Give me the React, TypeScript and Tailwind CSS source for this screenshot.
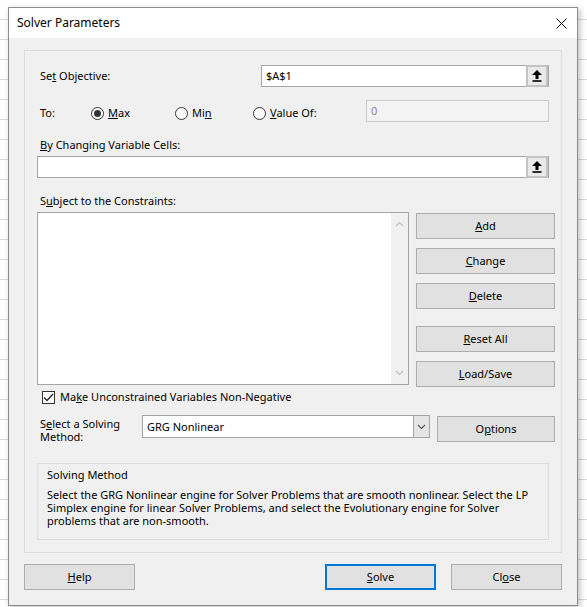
function RefButton() {
  return (
    <div className="flex h-[22px] w-[22px] shrink-0 items-center justify-center border-2 border-[#c4c4c4] bg-[#e9e9e9]">
      <svg width="10" height="12" viewBox="0 0 10 12">
        <polygon points="5,0 10,5 6.5,5 6.5,9 3.5,9 3.5,5 0,5" fill="#000" />
        <rect x="0.5" y="10.2" width="9" height="1.6" fill="#000" />
      </svg>
    </div>
  );
}

function Radio({ checked, label }: { checked?: boolean; label: React.ReactNode }) {
  return (
    <div className="flex items-center gap-[4px]">
      <span className="flex h-[13px] w-[13px] items-center justify-center rounded-full border border-[#333] bg-white">
        {checked && <span className="h-[7px] w-[7px] rounded-full bg-[#333]" />}
      </span>
      <span>{label}</span>
    </div>
  );
}

function Btn({ children, className = "" }: { children: React.ReactNode; className?: string }) {
  return (
    <div className={`flex h-[26px] items-center justify-center border border-[#adadad] bg-[#e1e1e1] ${className}`}>
      {children}
    </div>
  );
}

export default function App() {
  return (
    <div className="relative h-[607px] w-[587px] overflow-hidden bg-[repeating-linear-gradient(to_bottom,#ffffff_0,#ffffff_19px,#d9d9d9_19px,#d9d9d9_20px)] font-['Noto_Sans',sans-serif] text-[11px] leading-[16px] text-black">
      <div className="ml-[8px] mt-[7px] h-[599px] w-[570px] border border-[#8c8c8c] bg-[#f0f0f0] shadow-[2px_2px_6px_rgba(0,0,0,0.25)]">
        {/* title bar */}
        <div className="flex h-[30px] items-center justify-between bg-white pl-[8px] pr-[10px]">
          <span className="text-[12px]">Solver Parameters</span>
          <svg width="11" height="11" viewBox="0 0 11 11">
            <path d="M0.5 0.5 L10.5 10.5 M10.5 0.5 L0.5 10.5" stroke="#000" strokeWidth="1" />
          </svg>
        </div>

        <div className="px-[15px] pt-[12px]">
          {/* main group */}
          <div className="h-[503px] border border-[#dcdcdc] pl-[12px] pr-[5px]">
            <div className="mt-[14px] flex h-[22px] items-center">
              <span className="w-[224px] pl-[3px]">
                Se<u>t</u> Objective:
              </span>
              <div className="flex h-[22px] w-[288px] items-center border border-[#a5a5a5] bg-white pl-[4px]">
                <span className="flex-1">$A$1</span>
                <RefButton />
              </div>
            </div>

            <div className="mt-[13px] flex h-[22px] items-start">
              <span className="mt-[5px] w-[54px] pl-[3px]">To:</span>
              <div className="mt-[5px] w-[84px]">
                <Radio checked label={<><u>M</u>ax</>} />
              </div>
              <div className="mt-[5px] w-[78px]">
                <Radio label={<>Mi<u>n</u></>} />
              </div>
              <div className="mt-[5px] w-[113px]">
                <Radio label={<><u>V</u>alue Of:</>} />
              </div>
              <div className="flex h-[22px] w-[183px] items-center border border-[#cccccc] bg-[#f3f3f3] pl-[4px] text-[#8a8a8a]">
                0
              </div>
            </div>

            <div className="mt-[15px] h-[16px] pl-[3px]">
              <u>B</u>y Changing Variable Cells:
            </div>
            <div className="mt-[3px] flex h-[22px] w-[512px] items-center border border-[#a5a5a5] bg-white">
              <span className="flex-1" />
              <RefButton />
            </div>

            <div className="mt-[15px] h-[16px] pl-[3px]">
              S<u>u</u>bject to the Constraints:
            </div>
            <div className="mt-[3px] flex h-[175px] gap-[7px]">
              <div className="flex h-[173px] w-[372px] border border-[#a5a5a5] bg-white">
                <div className="flex-1" />
                <div className="flex w-[17px] flex-col items-center justify-between bg-[#f0f0f0] py-[8px]">
                  <svg width="9" height="6" viewBox="0 0 9 6">
                    <path d="M1 5 L4.5 1.5 L8 5" fill="none" stroke="#c2c2c2" strokeWidth="1.2" />
                  </svg>
                  <svg width="9" height="6" viewBox="0 0 9 6">
                    <path d="M1 1 L4.5 4.5 L8 1" fill="none" stroke="#c2c2c2" strokeWidth="1.2" />
                  </svg>
                </div>
              </div>
              <div className="mt-[1px] flex w-[139px] flex-col">
                <Btn><span><u>A</u>dd</span></Btn>
                <Btn className="mt-[9px]"><span><u>C</u>hange</span></Btn>
                <Btn className="mt-[9px]"><span><u>D</u>elete</span></Btn>
                <Btn className="mt-[17px]"><span><u>R</u>eset All</span></Btn>
                <Btn className="mt-[9px]"><span><u>L</u>oad/Save</span></Btn>
              </div>
            </div>

            <div className="mt-[2px] flex h-[16px] items-center gap-[5px] pl-[5px]">
              <span className="flex h-[13px] w-[13px] items-center justify-center border border-[#333] bg-white">
                <svg width="11" height="9" viewBox="0 0 11 9">
                  <path d="M1 4.5 L4 7.5 L10 1" fill="none" stroke="#222" strokeWidth="1.3" />
                </svg>
              </span>
              <span>
                Ma<u>k</u>e Unconstrained Variables Non-Negative
              </span>
            </div>

            <div className="mt-[10px] flex h-[27px]">
              <div className="mt-[2px] flex w-[105px] flex-col pl-[3px] leading-[13px]">
                <span>
                  S<u>e</u>lect a Solving
                </span>
                <span>Method:</span>
              </div>
              <div className="flex h-[23px] w-[288px] items-center border border-[#a5a5a5] bg-white pl-[4px]">
                <span className="flex-1">GRG Nonlinear</span>
                <div className="flex h-[21px] w-[16px] items-center justify-center border-l border-[#a5a5a5] bg-[#e5e5e5]">
                  <svg width="9" height="6" viewBox="0 0 9 6">
                    <path d="M1 1 L4.5 4.5 L8 1" fill="none" stroke="#555" strokeWidth="1.1" />
                  </svg>
                </div>
              </div>
              <Btn className="ml-[7px] mt-[1px] w-[118px]">
                <span>
                  O<u>p</u>tions
                </span>
              </Btn>
            </div>

            <div className="mt-[21px] h-[77px] w-[512px] border border-[#dcdcdc] px-[9px] pt-[3px]">
              <div>Solving Method</div>
              <div className="mt-[5px] leading-[13px]">
                Select the GRG Nonlinear engine for Solver Problems that are smooth nonlinear. Select the LP Simplex
                engine for linear Solver Problems, and select the Evolutionary engine for Solver problems that are
                non-smooth.
              </div>
            </div>
          </div>

          {/* bottom buttons */}
          <div className="mt-[11px] flex">
            <Btn className="w-[111px]">
              <span>
                <u>H</u>elp
              </span>
            </Btn>
            <div className="flex-1" />
            <div className="flex h-[26px] w-[111px] items-center justify-center border-2 border-[#0078d7] bg-[#e1e1e1]">
              <span>
                <u>S</u>olve
              </span>
            </div>
            <Btn className="ml-[15px] w-[111px]">
              <span>
                Cl<u>o</u>se
              </span>
            </Btn>
          </div>
        </div>
      </div>
    </div>
  );
}
